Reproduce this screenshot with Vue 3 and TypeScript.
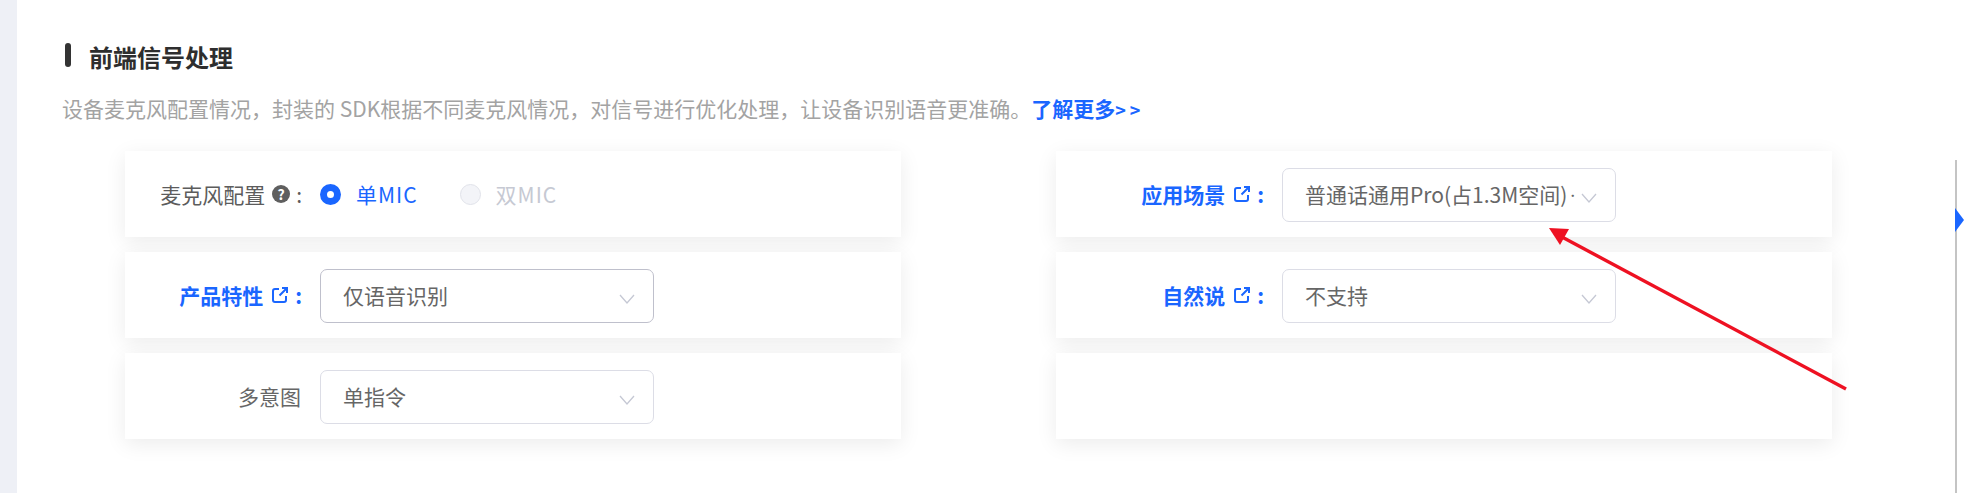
<script setup lang="ts">
interface Field {
  label: string
  value?: string
  tail?: string
  link?: boolean
  active?: boolean
}
const leftRows: Field[] = [
  { label: '产品特性', value: '仅语音识别', link: true, active: true },
  { label: '多意图', value: '单指令' },
]
const rightRows: Field[] = [
  { label: '应用场景', value: '普通话通用Pro(占1.3M空间)', tail: '·', link: true },
  { label: '自然说', value: '不支持', link: true },
]
</script>

<template>
  <div class="page">
    <aside class="strip"></aside>
    <main class="main">
      <h2 class="title"><i class="bar"></i>前端信号处理</h2>
      <p class="desc">设备麦克风配置情况，封装的 SDK根据不同麦克风情况，对信号进行优化处理，让设备识别语音更准确。<a class="more">了解更多<span class="gt">&gt;&gt;</span></a></p>
      <div class="cols">
        <div class="col left">
          <div class="card">
            <span class="label plain">麦克风配置<span class="help">?</span><span class="colon">:</span></span>
            <div class="radios">
              <span class="radio on"><i class="dot"></i>单MIC</span>
              <span class="radio off"><i class="dot"></i>双MIC</span>
            </div>
          </div>
          <div v-for="r in leftRows" :key="r.label" class="card">
            <span class="label" :class="{ link: r.link }">
              {{ r.label }}
              <template v-if="r.link">
                <svg class="ext" viewBox="0 0 16 16" fill="none" stroke="currentColor" stroke-width="2">
                  <path d="M7 2H3a2 2 0 0 0-2 2v9a2 2 0 0 0 2 2h9a2 2 0 0 0 2-2V9" />
                  <path d="M7.5 8.5 14 2M10 1h5v5" />
                </svg>
                <span class="colon">:</span>
              </template>
            </span>
            <div class="select" :class="{ active: r.active }">
              <span class="val">{{ r.value }}</span>
              <svg class="chev" viewBox="0 0 16 10" fill="none" stroke="currentColor" stroke-width="1.3"><path d="M1 1l7 8 7-8" /></svg>
            </div>
          </div>
        </div>
        <div class="col right">
          <div v-for="r in rightRows" :key="r.label" class="card">
            <span class="label link">
              {{ r.label }}
              <svg class="ext" viewBox="0 0 16 16" fill="none" stroke="currentColor" stroke-width="2">
                <path d="M7 2H3a2 2 0 0 0-2 2v9a2 2 0 0 0 2 2h9a2 2 0 0 0 2-2V9" />
                <path d="M7.5 8.5 14 2M10 1h5v5" />
              </svg>
              <span class="colon">:</span>
            </span>
            <div class="select">
              <span class="val">{{ r.value }}<span v-if="r.tail" class="tail">{{ r.tail }}</span></span>
              <svg class="chev" viewBox="0 0 16 10" fill="none" stroke="currentColor" stroke-width="1.3"><path d="M1 1l7 8 7-8" /></svg>
            </div>
          </div>
          <div class="card"></div>
        </div>
      </div>
    </main>
    <div class="slider"><i class="tri"></i></div>
    <svg class="annot" viewBox="0 0 1964 493">
      <line x1="1846" y1="389" x2="1562" y2="237" stroke="#ee1122" stroke-width="3.4" />
      <polygon points="1549,228 1569,229 1560,245" fill="#ee1122" />
    </svg>
  </div>
</template>

<style scoped>
.page {
  position: relative;
  display: flex;
  width: 1964px;
  height: 493px;
  overflow: hidden;
  background: #fff;
  font-family: "Noto Sans CJK SC", "Noto Sans", sans-serif;
  font-size: 21px;
  color: #666;
}
.strip {
  width: 17px;
  flex: none;
  background: #eef0f6;
}
.main {
  flex: 1;
  padding-top: 42px;
}
.title {
  display: flex;
  align-items: center;
  gap: 18px;
  margin: 0 0 0 48px;
  height: 30px;
  font-size: 24px;
  line-height: 30px;
  font-weight: 700;
  color: #2e2e2e;
}
.bar {
  width: 6px;
  height: 24px;
  margin-top: -4px;
  border-radius: 3px;
  background: #333;
}
.desc {
  margin: 21px 0 0 45px;
  height: 30px;
  line-height: 30px;
  white-space: nowrap;
  color: #a3a3a3;
}
.more {
  font-weight: 700;
  color: #1a66ff;
}
.gt {
  letter-spacing: 4px;
  font-size: 18px;
}
.cols {
  display: flex;
  gap: 155px;
  margin: 28px 0 0 108px;
}
.col {
  width: 776px;
  display: flex;
  flex-direction: column;
  gap: 15px;
}
.card {
  display: flex;
  align-items: center;
  height: 86px;
  background: #fff;
  box-shadow: 0 5px 20px rgba(0, 0, 0, 0.08);
}
.label {
  display: flex;
  align-items: center;
  justify-content: flex-end;
  flex: none;
  white-space: nowrap;
  color: #666;
}
.left .label {
  width: 176px;
  margin-right: 19px;
}
.left .label.link {
  width: 177px;
  margin-right: 18px;
}
.right .label {
  width: 208px;
  margin-right: 18px;
}
.label.link {
  color: #1a66ff;
  font-weight: 700;
}
.ext {
  width: 16px;
  height: 16px;
  margin: 0 7px 0 9px;
}
.colon {
  line-height: 1;
}
.left .label.plain {
  width: 177px;
  margin-right: 18px;
  color: #5c5c5c;
}
.help {
  display: inline-flex;
  align-items: center;
  justify-content: center;
  width: 18px;
  height: 18px;
  margin: 0 6px 0 7px;
  border-radius: 50%;
  background: #5f5f5f;
  color: #fff;
  font-size: 14px;
  font-weight: 700;
  line-height: 1;
}
.radios {
  display: flex;
  gap: 42px;
}
.radio {
  display: flex;
  align-items: center;
  gap: 15px;
  letter-spacing: 1px;
}
.dot {
  width: 21px;
  height: 21px;
  border-radius: 50%;
  box-sizing: border-box;
}
.radio.on {
  color: #1a66ff;
}
.radio.on .dot {
  border: 7px solid #1a66ff;
  background: #fff;
}
.radio.off {
  color: #c6c9d3;
}
.radio.off .dot {
  border: 1px solid #e1e3ea;
  background: #f3f4f8;
}
.select {
  position: relative;
  display: flex;
  align-items: center;
  box-sizing: border-box;
  width: 334px;
  height: 54px;
  margin-top: 2px;
  padding: 0 0 2px 22px;
  border: 1px solid #dcdde6;
  border-radius: 7px;
  background: #fff;
}
.select.active {
  border-color: #bfc0cc;
}
.val {
  white-space: nowrap;
  color: #666;
}
.tail {
  font-size: 11px;
  vertical-align: 3px;
}
.chev {
  position: absolute;
  right: 18px;
  top: 24px;
  width: 16px;
  height: 10px;
  color: #c5c8d4;
}
.slider {
  position: absolute;
  left: 1955px;
  top: 160px;
  bottom: 0;
  width: 2px;
  background: #c4c4c4;
}
.tri {
  position: absolute;
  left: 0;
  top: 48px;
  border-style: solid;
  border-width: 12px 0 12px 9px;
  border-color: transparent transparent transparent #1a66ff;
}
.annot {
  position: absolute;
  inset: 0;
  width: 1964px;
  height: 493px;
  pointer-events: none;
}
</style>
